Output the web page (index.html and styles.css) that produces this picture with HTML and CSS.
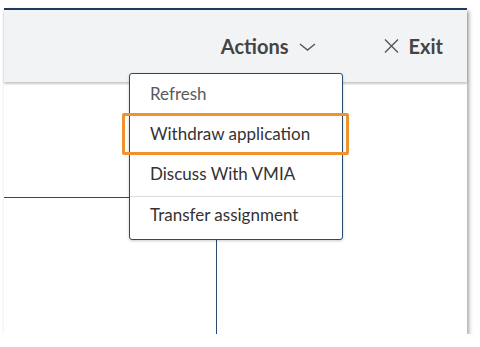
FILE: index.html
```html
<!DOCTYPE html>
<html lang="en">
<head>
    <meta charset="UTF-8">
    <meta name="viewport" content="width=device-width, initial-scale=1.0">
    <title>Application - Actions</title>
    <link rel="stylesheet" href="styles.css">
</head>
<body>

    <div class="panel">
        <div class="header">
            <a class="action-btn">
                Actions
                <svg class="chevron" width="17" height="8" viewBox="0 0 17 8">
                    <path d="M1 1 L8.5 7 L16 1" fill="none" stroke="#555" stroke-width="1.4"/>
                </svg>
            </a>
            <a class="exit-btn">
                <svg class="close" width="15" height="14" viewBox="0 0 15 14">
                    <path d="M1 0.5 L14 13.5 M14 0.5 L1 13.5" fill="none" stroke="#555" stroke-width="1.4"/>
                </svg>
                Exit
            </a>
        </div>

        <div class="content">
            <div class="cell"></div>
        </div>

        <!-- Actions dropdown -->
        <div class="menu">
            <div class="menu-item muted">Refresh</div>
            <div class="menu-item highlighted">Withdraw application</div>
            <div class="menu-item">Discuss With VMIA</div>
            <div class="menu-item divided">Transfer assignment</div>
        </div>
    </div>

</body>
</html>
```

FILE: styles.css
```css
body {
    font-family: 'Lato', sans-serif;
    margin: 0;
    padding: 0;
    background-color: #fff;
}
.panel {
    position: relative;
    width: 463px;
    height: 324px;
    margin: 8px 0 0 4px;
    border-top: 2px solid #1f3a5a;
    background: #fff;
    box-shadow: 2px 3px 4px rgba(0, 0, 0, 0.35);
    display: flex;
    flex-direction: column;
}
.header {
    height: 72px;
    background: #f2f3f5;
    box-shadow: 0 2px 2px rgba(0, 0, 0, 0.22);
    display: flex;
    align-items: center;
    justify-content: flex-end;
    padding-right: 24px;
    position: relative;
    z-index: 1;
}
.action-btn, .exit-btn {
    display: flex;
    align-items: center;
    font-size: 20px;
    font-weight: bold;
    color: #444;
    cursor: pointer;
}
.chevron {
    margin-left: 10px;
    margin-top: 2px;
}
.exit-btn {
    margin-left: 68px;
}
.close {
    margin-right: 10px;
}
.content {
    flex: 1;
    display: flex;
    flex-direction: column;
}
.cell {
    margin-top: 115px;
    width: 212px;
    flex: 1;
    border-top: 1px solid #2c4a6e;
    border-right: 1px solid #2c4a6e;
}
.menu {
    position: absolute;
    left: 125px;
    top: 63px;
    width: 212px;
    background: #fff;
    border: 1px solid #2c4a6e;
    border-radius: 3px;
    box-shadow: 0 1px 3px rgba(0, 0, 0, 0.2);
    z-index: 2;
}
.menu-item {
    position: relative;
    height: 40px;
    line-height: 40px;
    padding-left: 20px;
    font-size: 17px;
    color: #333;
}
.menu-item.muted {
    color: #5a5a5a;
}
.menu-item.divided {
    border-top: 1px solid #dcdcdc;
    margin-top: 2px;
    height: 42px;
    line-height: 35px;
}
.highlighted::after {
    content: "";
    position: absolute;
    left: -8px;
    right: -7px;
    top: -1px;
    bottom: -1px;
    border: 3px solid #f0922e;
    border-radius: 2px;
}
```
